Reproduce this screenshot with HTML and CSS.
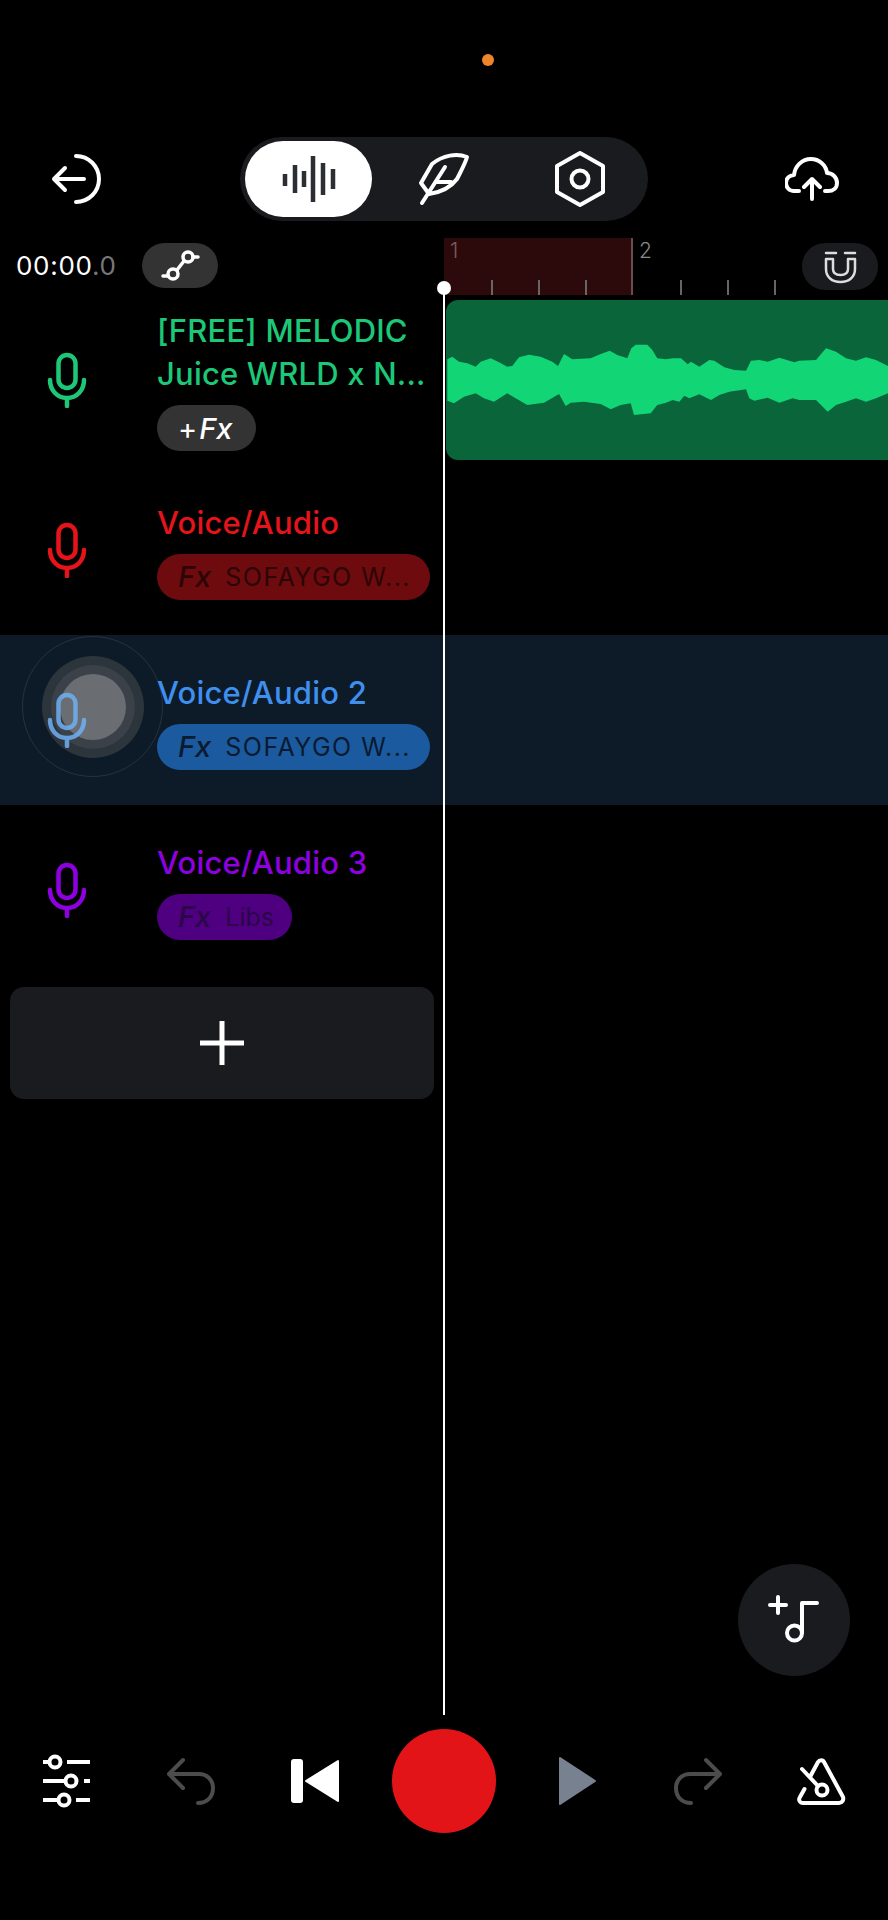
FILE: index.html
```html
<!DOCTYPE html>
<html lang="en">
<head>
    <meta charset="UTF-8">
    <meta name="viewport" content="width=device-width, initial-scale=1.0">
    <title>Studio</title>
    <link rel="stylesheet" href="styles.css">
</head>
<body>
<div class="app">
    <div class="rec-dot"></div>

    <div class="header">
        <svg class="icon back" viewBox="0 0 52 52"><path d="M26 3a23 23 0 0 1 0 46M4 26H34M15 15L4 26L15 37"/></svg>
        <div class="tabs">
            <div class="tab tab-active">
                <svg class="icon bars" viewBox="0 0 56 50"><path d="M4 20V32M14 11V39M23 17V33M32 2V48M42 9V41M52 15V35"/></svg>
            </div>
            <div class="tab">
                <svg class="icon" width="60" height="60" viewBox="15 17 60 60"><path d="M68 25C58 21 44 23 33 32L22 51L30 62C44 60 52 55 58 47C62 39 66 32 68 25ZM23 71L46 35M37 50H52"/></svg>
            </div>
            <div class="tab">
                <svg class="icon" width="60" height="60" viewBox="-30 -30 60 60"><path d="M0-26L23-13V13L0 26L-23 13V-13Z"/><circle r="8.500"/></svg>
            </div>
        </div>
        <svg class="icon cloud" viewBox="0 0 54 44"><path d="M14 34H9C4 34 1 30 1 26C1 21 5 18 9 18C10 9 17 2 26 2C34 2 41 8 42 16C48 16 52 21 52 26C52 31 48 34 43 34H40M27 42V22M19 30L27 22L35 30"/></svg>
    </div>

    <div class="timeline">
        <div class="time-col">
            <div class="time">00:00<span class="time-dim">.0</span></div>
            <div class="chip chip-link">
                <svg class="icon thin" width="50" height="40" viewBox="0 0 50 40"><path d="M8 31H13M38 12H43M22 25L29 16"/><circle cx="18" cy="29" r="5"/><circle cx="33" cy="12" r="5"/></svg>
            </div>
        </div>
        <div class="ruler">
            <div class="bar bar-loop">
                <span class="bar-num">1</span>
                <div class="beats"><i></i><i></i><i></i><i></i></div>
            </div>
            <div class="bar">
                <span class="bar-num">2</span>
                <div class="beats"><i></i><i></i><i></i><i></i></div>
            </div>
            <div class="chip chip-magnet">
                <svg class="icon magnet" width="42" height="42" viewBox="0 0 42 42"><path d="M7 7H17M26 7H36M7 13V23C7 31 13 36 21.500 36C30 36 36 31 36 23V13H29V23C29 27 26 29 21.500 29C17 29 14 27 14 23V13Z"/></svg>
            </div>
        </div>
    </div>

    <div class="track green">
        <div class="track-head">
            <svg class="icon mic" viewBox="0 0 44 56"><rect x="13.500" y="3" width="17" height="33" rx="8.500"/><path d="M5 28C5 38 12 46 22 46C32 46 39 38 39 28M22 46V54"/></svg>
            <div class="track-info">
                <div class="track-name">[FREE] MELODIC<br>Juice WRLD x N...</div>
                <div class="fx fx-add">+ <em>Fx</em></div>
            </div>
        </div>
        <div class="lane">
            <div class="clip">
                <svg class="wave" viewBox="0 0 442 160" preserveAspectRatio="none"><polygon points="1.300,59.300 6.300,56.700 13,61.700 21.300,63.300 29.700,66.700 34.700,61.700 44.700,58.300 53,62.300 61.300,66.700 66.300,66 73,57.300 83,54.700 94.700,56.700 106.300,61.700 112,66 118,54 126.300,59.300 144.700,58.300 154.700,54 163.700,50.700 171.300,55 181.300,58.300 185.300,48.300 189.700,44.700 201.300,44.700 206.300,50 211.300,58.300 220,59.300 226.700,58.300 235,58.300 241.700,64.300 245,61.700 253.300,66.700 263.300,60 268.300,60.700 278.300,67.300 288.300,70 300,70.700 305,60.700 313.300,60 321.700,61.700 333.300,57.700 348.300,62.300 353.300,60.700 370,60 380,48.300 390,51.700 400,58.300 410,60.700 420,57.300 430,60 442,66 442,93.300 430,98.300 420,101.700 410,98.300 400,101.700 390,105 381.700,111.700 375,105 370,100 353.300,100 346.700,98.300 333.300,102.700 321.700,97.700 308.300,100.700 303.300,98.300 300,89.300 283.300,91.700 273.300,95 265,100 253.300,94.300 243.300,98.300 238.300,95.700 233.300,101.700 226.700,100 220,102.700 211.300,105 204.700,113.300 188,115 184.700,103.300 174.700,105 164.700,109.300 154.700,104 138,101.700 124.700,102.700 119.700,106 113,94 98,102.700 81.300,105 69.700,98.300 61.300,93.300 48,101.700 38,98.300 29.700,93.300 18,96.700 8,103.300 1.300,100.700"/></svg>
            </div>
        </div>
    </div>

    <div class="track red">
        <div class="track-head">
            <svg class="icon mic" viewBox="0 0 44 56"><rect x="13.500" y="3" width="17" height="33" rx="8.500"/><path d="M5 28C5 38 12 46 22 46C32 46 39 38 39 28M22 46V54"/></svg>
            <div class="track-info">
                <div class="track-name">Voice/Audio</div>
                <div class="fx fx-wide"><em>Fx</em><span>SOFAYGO W...</span></div>
            </div>
        </div>
        <div class="lane"></div>
    </div>

    <div class="track blue selected">
        <div class="track-head">
            <div class="touch"><div class="touch-mid"><div class="touch-core"></div></div></div>
            <svg class="icon mic" viewBox="0 0 44 56"><rect x="13.500" y="3" width="17" height="33" rx="8.500"/><path d="M5 28C5 38 12 46 22 46C32 46 39 38 39 28M22 46V54"/></svg>
            <div class="track-info">
                <div class="track-name">Voice/Audio 2</div>
                <div class="fx fx-wide"><em>Fx</em><span>SOFAYGO W...</span></div>
            </div>
        </div>
        <div class="lane"></div>
    </div>

    <div class="track purple">
        <div class="track-head">
            <svg class="icon mic" viewBox="0 0 44 56"><rect x="13.500" y="3" width="17" height="33" rx="8.500"/><path d="M5 28C5 38 12 46 22 46C32 46 39 38 39 28M22 46V54"/></svg>
            <div class="track-info">
                <div class="track-name">Voice/Audio 3</div>
                <div class="fx fx-short"><em>Fx</em><span>Libs</span></div>
            </div>
        </div>
        <div class="lane"></div>
    </div>

    <div class="add-track">
        <svg class="icon plus" width="46" height="46" viewBox="0 0 46 46"><path d="M23 1V45M1 23H45"/></svg>
    </div>

    <div class="spacer"></div>

    <div class="fab">
        <svg class="icon" width="56" height="56" viewBox="0 0 56 56"><path d="M4 13H20M12 5V21M36 40V11H51"/><circle cx="28.500" cy="41" r="7.500"/></svg>
    </div>

    <div class="controls">
        <svg class="icon sliders" width="56" height="56" viewBox="0 0 56 56"><path d="M4 9H11M28 9H51M4 28H26M45 28H51M4 47H19M37 47H51"/><circle cx="16" cy="9" r="5.500"/><circle cx="32" cy="28" r="5.500"/><circle cx="25" cy="47" r="5.500"/></svg>
        <svg class="icon dim" width="56" height="56" viewBox="0 0 56 56"><path d="M20 7L6 21L20 35M6 21H36C44 21 50 27 50 35C50 44 44 50 35 50"/></svg>
        <svg class="solid" width="56" height="56" viewBox="0 0 56 56"><rect x="5" y="7" width="10" height="42" rx="2"/><path d="M19 28L51 8V48Z"/></svg>
        <div class="record"></div>
        <svg class="play" width="56" height="56" viewBox="0 0 56 56"><path d="M12 5L47 28L12 51Z"/></svg>
        <svg class="icon dim" width="56" height="56" viewBox="0 0 56 56"><path d="M36 7L50 21L36 35M50 21H20C12 21 6 27 6 35C6 44 12 50 21 50"/></svg>
        <svg class="icon" width="56" height="56" viewBox="0 0 56 56"><path d="M16 24L24 9C25.500 6.500 29 6.500 30 9L49 44C50 47 48 50 45 50H9C6 50 4 47 6 44L10.500 36M8 16L24 33"/><circle cx="28" cy="37" r="5.500"/></svg>
    </div>

    <div class="playhead"></div>
</div>
</body>
</html>
```

FILE: styles.css
```css
body {
    margin: 0;
    background-color: #000;
    font-family: Inter, Lato, "Liberation Sans", sans-serif;
    color: white;
}
.app {
    position: relative;
    width: 888px;
    height: 1920px;
    padding-top: 137px;
    box-sizing: border-box;
    display: flex;
    flex-direction: column;
    overflow: hidden;
}
.rec-dot {
    position: absolute;
    left: 482px;
    top: 54px;
    width: 12px;
    height: 12px;
    border-radius: 50%;
    background-color: #f0842c;
}
.icon {
    fill: none;
    stroke: white;
    stroke-width: 4;
    stroke-linecap: round;
    stroke-linejoin: round;
    flex: none;
}
.header {
    height: 84px;
    display: flex;
    align-items: center;
    margin-bottom: 16px;
}
.back {
    width: 52px;
    height: 52px;
    margin-left: 50px;
}
.tabs {
    width: 408px;
    height: 84px;
    margin-left: 138px;
    border-radius: 42px;
    background-color: #1a1b1e;
    display: flex;
}
.tab {
    width: 136px;
    flex: none;
    display: flex;
    align-items: center;
    justify-content: center;
}
.tab-active {
    width: 127px;
    margin: 4px 4px 4px 5px;
    background-color: white;
    border-radius: 38px;
}
.bars {
    width: 56px;
    height: 50px;
    stroke: #2b2f33;
    stroke-width: 4.500;
    stroke-linecap: butt;
}
.cloud {
    width: 54px;
    height: 44px;
    margin-left: 137px;
}
.timeline {
    height: 58px;
    display: flex;
}
.time-col {
    width: 444px;
    display: flex;
    align-items: center;
    padding-left: 16px;
    box-sizing: border-box;
}
.time {
    width: 126px;
    font-size: 26px;
    letter-spacing: 0.7px;
    margin-top: -2px;
}
.time-dim {
    color: #777;
}
.chip {
    display: flex;
    align-items: center;
    justify-content: center;
    width: 76px;
    height: 45px;
    border-radius: 23px;
}
.chip-link {
    background-color: #333;
    margin-top: -2px;
}
.thin {
    stroke-width: 3.500;
}
.ruler {
    position: relative;
    flex: 1;
    display: flex;
    padding-top: 1px;
}
.bar {
    position: relative;
    width: 189px;
    flex: none;
}
.bar-loop {
    background-color: #2c0a0c;
    border-right: 2px solid #6d4a4c;
    box-sizing: border-box;
}
.bar-num {
    position: absolute;
    left: 6px;
    top: 0;
    font-size: 21px;
    font-weight: 300;
    color: #8a8a8a;
}
.bar-loop .bar-num {
    color: #7d5a5c;
}
.beats {
    position: absolute;
    left: 0;
    bottom: 0;
    display: flex;
}
.beats i {
    width: 47px;
    height: 15px;
    box-sizing: border-box;
    border-left: 2px solid #666;
}
.beats i:first-child {
    border-left-color: transparent;
}
.chip-magnet {
    position: absolute;
    right: 10px;
    top: 6px;
    height: 47px;
    background-color: #1a1b1e;
}
.magnet {
    stroke-width: 2.500;
    stroke: #ddd;
}
.track {
    height: 170px;
    display: flex;
}
.track-head {
    position: relative;
    width: 444px;
    flex: none;
    display: flex;
    align-items: center;
    padding-left: 45px;
    box-sizing: border-box;
}
.mic {
    position: relative;
    width: 44px;
    height: 56px;
    stroke-width: 4.500;
}
.track-info {
    position: relative;
    margin-left: 68px;
}
.track-name {
    font-size: 31px;
    line-height: 43px;
    font-weight: 500;
    letter-spacing: 0.2px;
    white-space: nowrap;
}
.fx {
    display: inline-flex;
    align-items: center;
    height: 46px;
    margin-top: 10px;
    padding: 0 20px 0 21px;
    border-radius: 23px;
    font-size: 25px;
    letter-spacing: 1.500px;
    vertical-align: top;
    white-space: nowrap;
}
.fx em {
    font-size: 29px;
    font-weight: 500;
    letter-spacing: 0;
    margin-right: 14px;
}
.fx-wide {
    width: 273px;
    box-sizing: border-box;
}
.fx-short {
    letter-spacing: 0;
    padding-right: 18px;
}
.fx-add {
    padding: 0 24px 0 21px;
    background-color: #333;
    color: white;
    font-size: 29px;
    letter-spacing: 0;
}
.fx-add em {
    margin: 0 0 0 2px;
}
.green .track-name { color: #1cc878; }
.red .track-name { color: #e5141b; }
.red .fx { background-color: #6d0b0e; color: #2c0507; }
.blue .track-name { color: #3f8fef; }
.blue .fx { background-color: #1b5a9e; color: #0a1a30; }
.purple .track-name { color: #8f00e0; }
.purple .fx { background-color: #4f0080; color: #2b0648; }
.green .mic { stroke: #1cc878; }
.red .mic { stroke: #e5141b; }
.blue .mic { stroke: #6fb0f5; opacity: 0.85; }
.purple .mic { stroke: #8f00e0; }
.selected {
    background-color: #0d1b29;
}
.touch {
    position: absolute;
    left: 22px;
    top: 1px;
    width: 141px;
    height: 141px;
    box-sizing: border-box;
    border-radius: 50%;
    border: 1px solid #26323e;
    display: flex;
    align-items: center;
    justify-content: center;
}
.touch-mid {
    width: 102px;
    height: 102px;
    border-radius: 50%;
    background-color: #2c343c;
    display: flex;
    align-items: center;
    justify-content: center;
}
.touch-core {
    width: 66px;
    height: 66px;
    border-radius: 50%;
    background-color: #6a6e72;
    box-shadow: 0 0 0 9px #3a4148;
}
.lane {
    flex: 1;
    padding: 5px 0 5px 2px;
}
.clip {
    height: 160px;
    background-color: #0b653a;
    border-radius: 12px 0 0 12px;
    overflow: hidden;
}
.wave {
    display: block;
    width: 442px;
    height: 160px;
    fill: #12d675;
}
.add-track {
    width: 424px;
    height: 112px;
    margin: 12px 0 0 10px;
    border-radius: 14px;
    background-color: #1a1b1e;
    display: flex;
    align-items: center;
    justify-content: center;
}
.plus {
    stroke-width: 5;
    stroke-linecap: butt;
}
.spacer {
    flex: 1;
}
.fab {
    align-self: flex-end;
    width: 112px;
    height: 112px;
    margin-right: 38px;
    border-radius: 50%;
    background-color: #1a1b1e;
    display: flex;
    align-items: center;
    justify-content: center;
}
.controls {
    display: grid;
    grid-template-columns: 124px 124px 105px 156px 122px 124px 56px;
    align-items: center;
    height: 104px;
    padding-left: 39px;
    margin: 53px 0 87px;
}
.sliders {
    stroke-linecap: butt;
}
.dim {
    stroke: #4c4c4c;
}
.solid {
    fill: white;
    stroke: white;
    stroke-width: 2;
    stroke-linejoin: round;
}
.play {
    fill: #77818f;
    stroke: #77818f;
    stroke-width: 2;
    stroke-linejoin: round;
}
.record {
    width: 104px;
    height: 104px;
    border-radius: 50%;
    background-color: #e21418;
}
.playhead {
    position: absolute;
    left: 443px;
    top: 288px;
    width: 2px;
    height: 1427px;
    background-color: white;
}
.playhead::before {
    content: "";
    position: absolute;
    left: -6px;
    top: -7px;
    width: 14px;
    height: 14px;
    border-radius: 50%;
    background-color: white;
}
```
